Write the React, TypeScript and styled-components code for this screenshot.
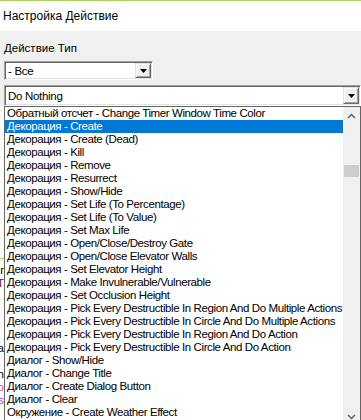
import React from "react";
import styled, { createGlobalStyle } from "styled-components";

const Global = createGlobalStyle`
  html, body { margin: 0; padding: 0; background: #f0f0f0; }
  body { font-family: "Liberation Sans", Arial, sans-serif; color: #000; }
`;

const Frame = styled.div`
  position: relative;
  width: 361px;
  height: 420px;
  overflow: hidden;
  background: #f0f0f0;
  display: flex;
  flex-direction: column;
`;

const Accent = styled.div`
  height: 1px;
  flex: none;
  background: #a8d25a;
`;

const TitleBar = styled.div`
  height: 30px;
  flex: none;
  background: #fff;
  display: flex;
  align-items: center;
  padding-left: 3px;
  font-size: 12px;
`;

const Body = styled.div`
  flex: none;
  display: flex;
  flex-direction: column;
  padding: 10px 0 0 4px;
`;

const Label = styled.div`
  height: 15px;
  line-height: 15px;
  font-size: 11.5px;
`;

const Combo = styled.div<{ $w: number; $h: number; $gap: number }>`
  box-sizing: border-box;
  width: ${(p) => p.$w}px;
  height: ${(p) => p.$h}px;
  margin-top: ${(p) => p.$gap}px;
  background: #fff;
  border: 1px solid;
  border-color: #a0a0a0 #ffffff #ffffff #a0a0a0;
  box-shadow: inset 1px 1px 0 #696969, inset -1px -1px 0 #e3e3e3;
  display: flex;
  align-items: center;
  padding: 1px;
`;

const ComboText = styled.div`
  flex: 1;
  min-width: 0;
  padding-left: 2px;
  font-size: 11.5px;
  letter-spacing: -0.3px;
  white-space: nowrap;
`;

const ArrowButton = styled.div<{ $h: number }>`
  box-sizing: border-box;
  width: 16px;
  height: ${(p) => p.$h}px;
  flex: none;
  background: #f0f0f0;
  border: 1px solid;
  border-color: #e3e3e3 #696969 #696969 #e3e3e3;
  box-shadow: inset 1px 1px 0 #ffffff, inset -1px -1px 0 #a0a0a0;
  display: flex;
  align-items: center;
  justify-content: center;
`;

const UnderArea = styled.div`
  flex: 1;
  background: #fff;
  display: flex;
  flex-direction: column;
  padding-top: 152px;
`;

const Rule = styled.div`
  height: 1px;
  width: 4px;
  background: #a6d158;
`;

const Fragments = styled.div`
  margin-top: 5px;
  width: 4px;
  overflow: hidden;
  display: flex;
  flex-direction: column;
`;

const Fragment = styled.div<{ $c?: string }>`
  height: 13px;
  line-height: 13px;
  font-size: 11.5px;
  white-space: nowrap;
  display: flex;
  justify-content: flex-end;
  color: ${(p) => p.$c || "#000"};
`;

const DropList = styled.div`
  position: absolute;
  left: 4px;
  top: 106px;
  width: 357px;
  height: 320px;
  box-sizing: border-box;
  border: 1px solid #646464;
  background: #fff;
  display: flex;
`;

const Items = styled.div`
  flex: 1;
  min-width: 0;
  overflow: hidden;
  display: flex;
  flex-direction: column;
`;

const Item = styled.div<{ $sel?: boolean }>`
  height: 13px;
  line-height: 13px;
  flex: none;
  font-size: 11.5px;
  letter-spacing: -0.4px;
  white-space: nowrap;
  padding-left: 2px;
  background: ${(p) => (p.$sel ? "#0078d7" : "transparent")};
  color: ${(p) => (p.$sel ? "#fff" : "#000")};
`;

const ScrollBar = styled.div`
  width: 17px;
  flex: none;
  background: #f0f0f0;
  display: flex;
  flex-direction: column;
`;

const ScrollButton = styled.div`
  height: 17px;
  flex: none;
  display: flex;
  align-items: center;
  justify-content: center;
`;

const Track = styled.div`
  flex: 1;
  padding-top: 41px;
`;

const Thumb = styled.div`
  height: 12px;
  margin: 0 1px;
  background: #cdcdcd;
`;

const Triangle = () => (
  <svg width="7" height="4" viewBox="0 0 7 4">
    <polygon points="0,0 7,0 3.5,4" fill="#000" />
  </svg>
);

const Chevron = ({ up }: { up?: boolean }) => (
  <svg width="9" height="6" viewBox="0 0 9 6">
    <polyline
      points={up ? "1,5 4.5,1.5 8,5" : "1,1 4.5,4.5 8,1"}
      fill="none"
      stroke="#606060"
      strokeWidth="1.5"
    />
  </svg>
);

const items = [
  "Обратный отсчет - Change Timer Window Time Color",
  "Декорация - Create",
  "Декорация - Create (Dead)",
  "Декорация - Kill",
  "Декорация - Remove",
  "Декорация - Resurrect",
  "Декорация - Show/Hide",
  "Декорация - Set Life (To Percentage)",
  "Декорация - Set Life (To Value)",
  "Декорация - Set Max Life",
  "Декорация - Open/Close/Destroy Gate",
  "Декорация - Open/Close Elevator Walls",
  "Декорация - Set Elevator Height",
  "Декорация - Make Invulnerable/Vulnerable",
  "Декорация - Set Occlusion Height",
  "Декорация - Pick Every Destructible In Region And Do Multiple Actions",
  "Декорация - Pick Every Destructible In Circle And Do Multiple Actions",
  "Декорация - Pick Every Destructible In Region And Do Action",
  "Декорация - Pick Every Destructible In Circle And Do Action",
  "Диалог - Show/Hide",
  "Диалог - Change Title",
  "Диалог - Create Dialog Button",
  "Диалог - Clear",
  "Окружение - Create Weather Effect",
];

const fragments: { t: string; c?: string }[] = [
  { t: "r" },
  { t: "T", c: "#5e1652" },
  { t: "" },
  { t: "" },
  { t: "" },
  { t: "" },
  { t: "a" },
  { t: "" },
  { t: "n" },
  { t: "o", c: "#c23cc2" },
  { t: "s", c: "#c23cc2" },
];

export default function App() {
  return (
    <>
      <Global />
      <Frame>
        <Accent />
        <TitleBar>Настройка Действие</TitleBar>
        <Body>
          <Label>Действие Тип</Label>
          <Combo $w={149} $h={19} $gap={5}>
            <ComboText>- Все</ComboText>
            <ArrowButton $h={15}>
              <Triangle />
            </ArrowButton>
          </Combo>
          <Combo $w={357} $h={21} $gap={5}>
            <ComboText>Do Nothing</ComboText>
            <ArrowButton $h={17}>
              <Triangle />
            </ArrowButton>
          </Combo>
        </Body>
        <UnderArea>
          <Rule />
          <Fragments>
            {fragments.map((f, i) => (
              <Fragment key={i} $c={f.c}>
                {f.t}
              </Fragment>
            ))}
          </Fragments>
        </UnderArea>
        <DropList>
          <Items>
            {items.map((t, i) => (
              <Item key={i} $sel={i === 1}>
                {t}
              </Item>
            ))}
          </Items>
          <ScrollBar>
            <ScrollButton>
              <Chevron up />
            </ScrollButton>
            <Track>
              <Thumb />
            </Track>
            <ScrollButton>
              <Chevron />
            </ScrollButton>
          </ScrollBar>
        </DropList>
      </Frame>
    </>
  );
}
